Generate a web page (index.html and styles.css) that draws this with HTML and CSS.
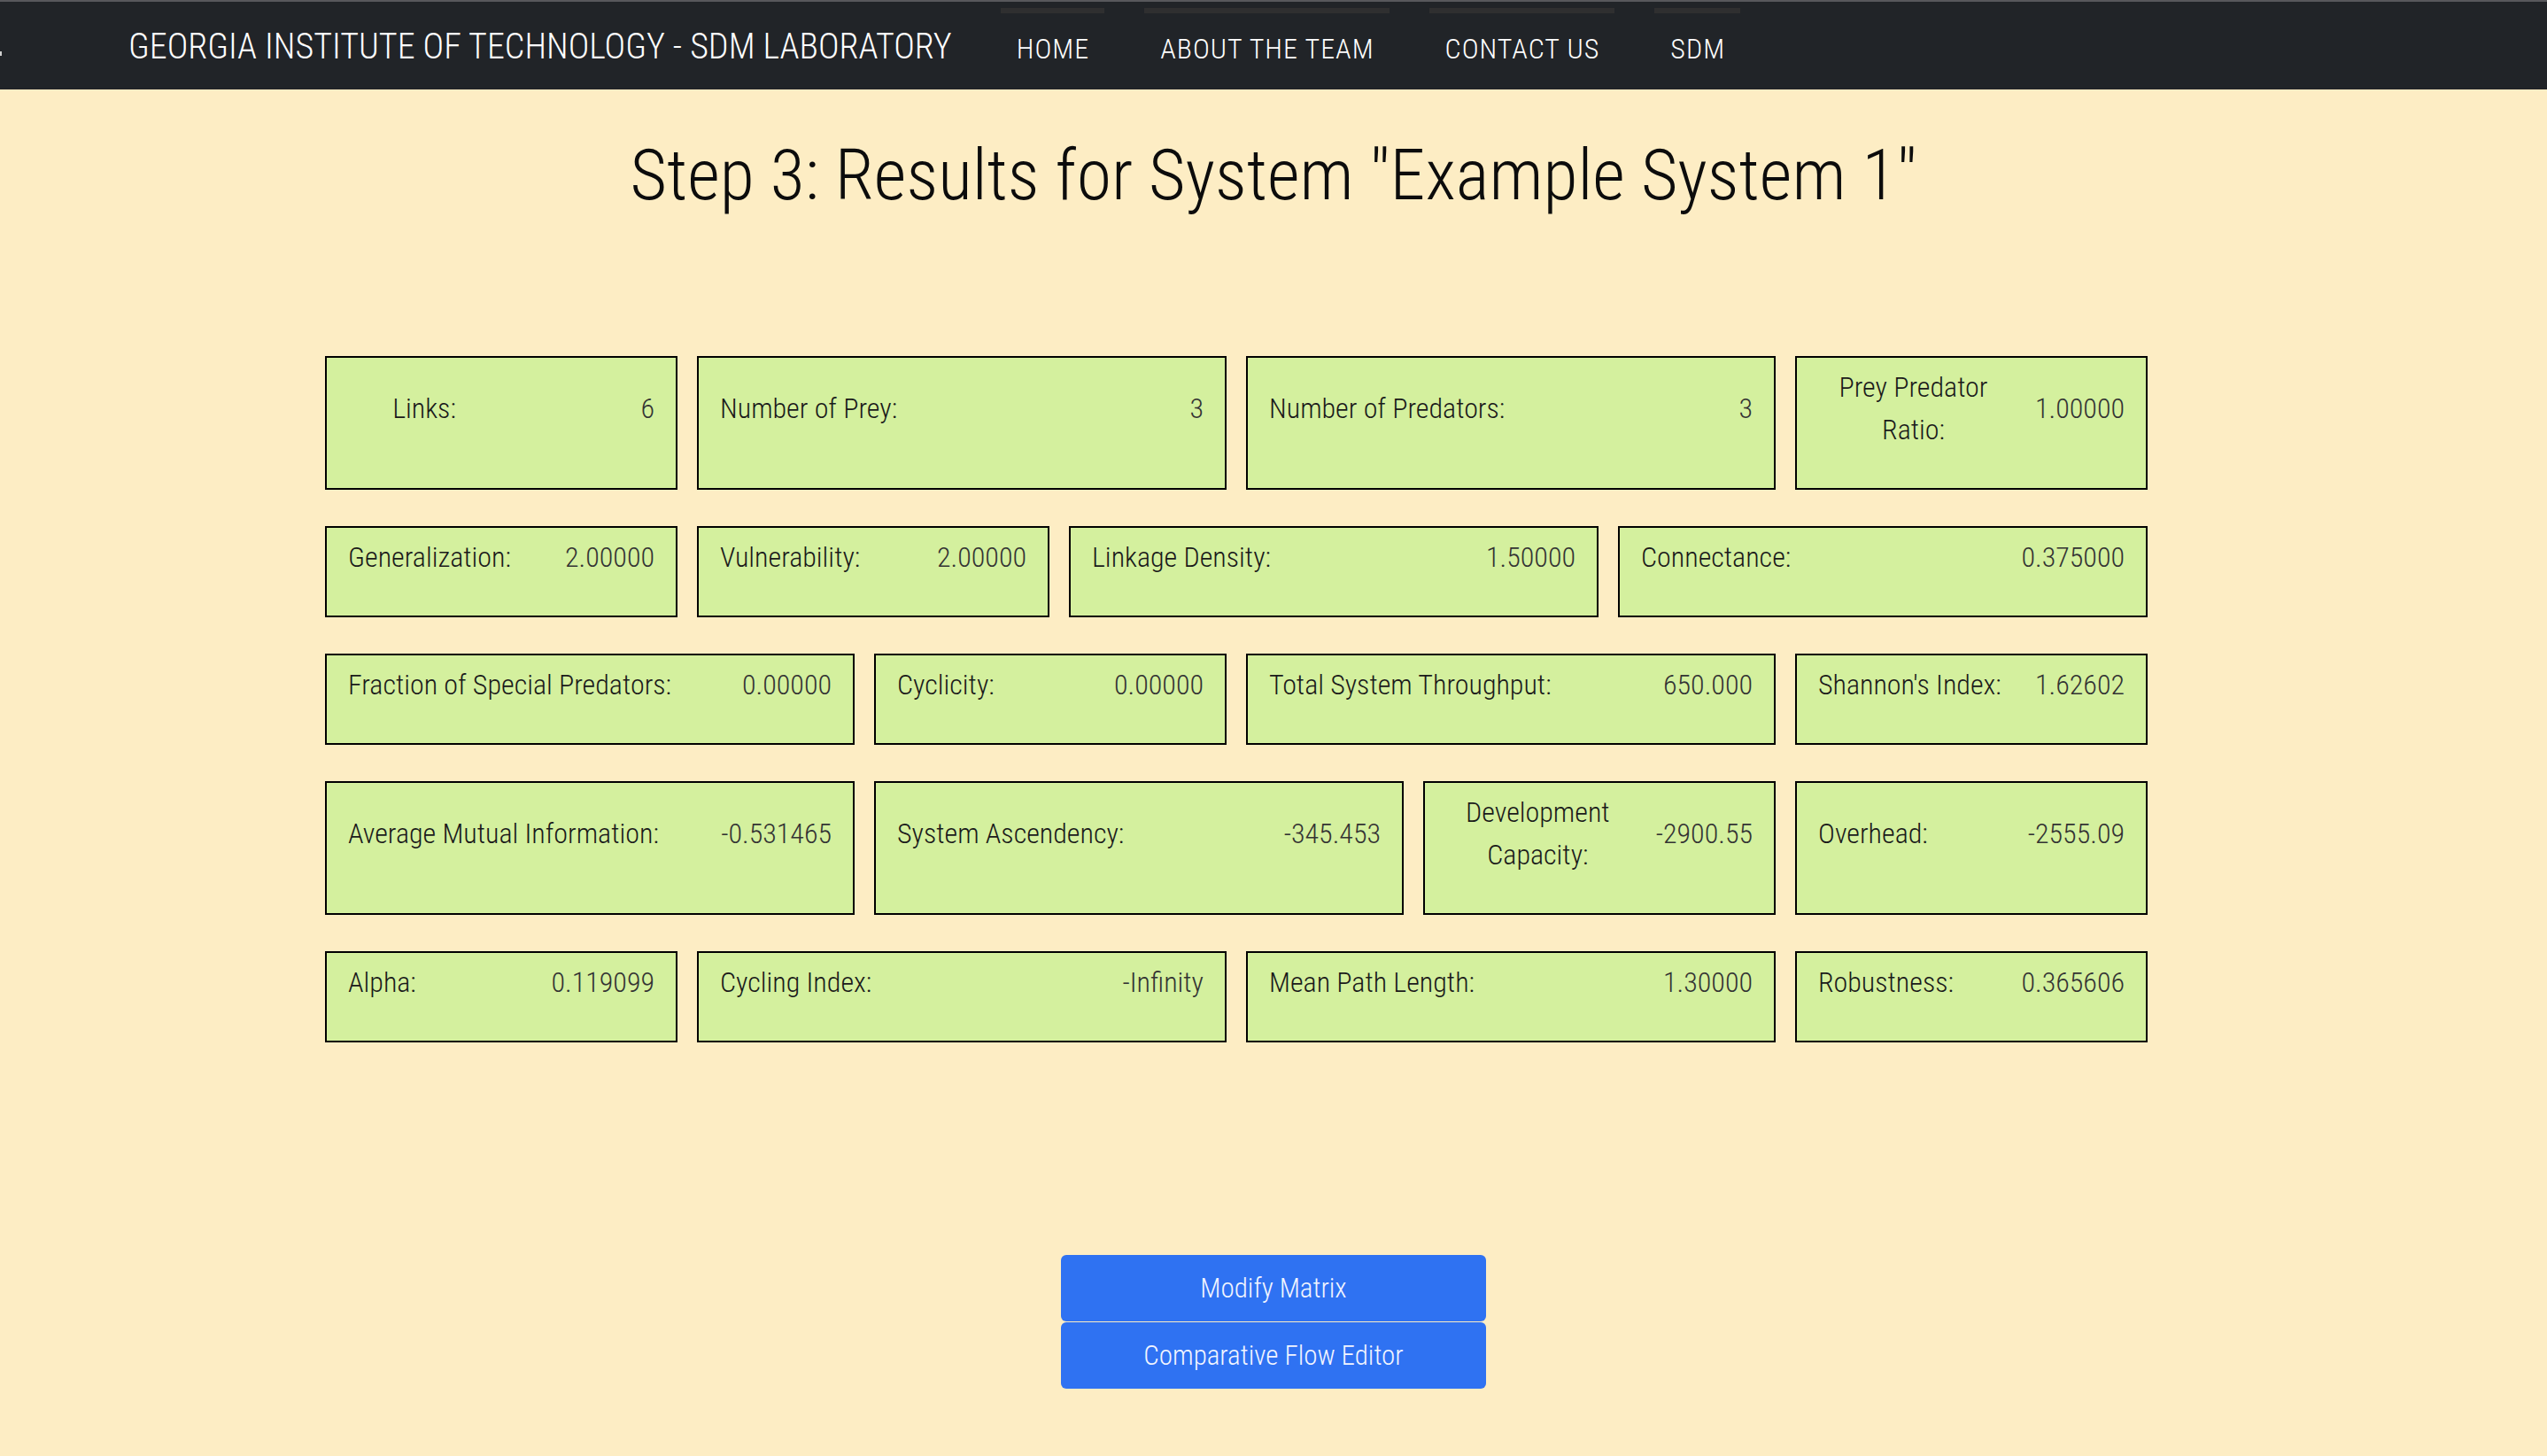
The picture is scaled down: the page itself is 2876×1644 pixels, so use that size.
FILE: index.html
```html
<!DOCTYPE html>
<html lang="en">
<head>
<meta charset="utf-8">
<title>Step 3: Results</title>
<link rel="stylesheet" href="styles.css">
</head>
<body>
<header class="navbar">
  <span class="edge-mark"></span>
  <a class="brand" href="#">GEORGIA INSTITUTE OF TECHNOLOGY - SDM LABORATORY</a>
  <nav class="nav">
    <a class="nav-link" href="#">HOME</a>
    <a class="nav-link" href="#">ABOUT THE TEAM</a>
    <a class="nav-link" href="#">CONTACT US</a>
    <a class="nav-link" href="#">SDM</a>
  </nav>
</header>

<main class="page">
  <h1 class="title">Step 3: Results for System "Example System 1"</h1>

  <section class="results">
    <div class="row">
      <div class="card c2"><div class="label wide">Links:</div><div class="value">6</div></div>
      <div class="card c3"><div class="label">Number of Prey:</div><div class="value">3</div></div>
      <div class="card c3"><div class="label">Number of Predators:</div><div class="value">3</div></div>
      <div class="card c2"><div class="label">Prey Predator Ratio:</div><div class="value">1.00000</div></div>
    </div>
    <div class="row">
      <div class="card c2"><div class="label">Generalization:</div><div class="value">2.00000</div></div>
      <div class="card c2"><div class="label">Vulnerability:</div><div class="value">2.00000</div></div>
      <div class="card c3"><div class="label">Linkage Density:</div><div class="value">1.50000</div></div>
      <div class="card c3"><div class="label">Connectance:</div><div class="value">0.375000</div></div>
    </div>
    <div class="row">
      <div class="card c3"><div class="label">Fraction of Special Predators:</div><div class="value">0.00000</div></div>
      <div class="card c2"><div class="label">Cyclicity:</div><div class="value">0.00000</div></div>
      <div class="card c3"><div class="label">Total System Throughput:</div><div class="value">650.000</div></div>
      <div class="card c2"><div class="label">Shannon's Index:</div><div class="value">1.62602</div></div>
    </div>
    <div class="row">
      <div class="card c3"><div class="label">Average Mutual Information:</div><div class="value">-0.531465</div></div>
      <div class="card c3"><div class="label">System Ascendency:</div><div class="value">-345.453</div></div>
      <div class="card c2"><div class="label">Development Capacity:</div><div class="value">-2900.55</div></div>
      <div class="card c2"><div class="label">Overhead:</div><div class="value">-2555.09</div></div>
    </div>
    <div class="row">
      <div class="card c2"><div class="label">Alpha:</div><div class="value">0.119099</div></div>
      <div class="card c3"><div class="label">Cycling Index:</div><div class="value">-Infinity</div></div>
      <div class="card c3"><div class="label">Mean Path Length:</div><div class="value">1.30000</div></div>
      <div class="card c2"><div class="label">Robustness:</div><div class="value">0.365606</div></div>
    </div>
  </section>

  <div class="actions">
    <button class="btn" type="button">Modify Matrix</button>
    <button class="btn" type="button">Comparative Flow Editor</button>
  </div>
</main>
</body>
</html>
```

FILE: styles.css
```css
html, body {
  margin: 0;
  padding: 0;
}
body {
  background: #fdedc4;
  font-family: "Roboto Condensed", Roboto, "Liberation Sans", sans-serif;
  font-stretch: condensed;
  color: #2b2b2b;
  min-height: 1644px;
}

/* navbar */
.navbar {
  height: 99px;
  background: #212428;
  border-top: 2px solid #58585c;
  display: flex;
  align-items: center;
  position: relative;
}
.edge-mark {
  position: absolute;
  left: 0;
  top: 56px;
  width: 2px;
  height: 5px;
  background: #cfcfcf;
}
.brand {
  margin-left: 145px;
  color: #ffffff;
  text-decoration: none;
  font-size: 40px;
  font-weight: 300;
  line-height: 1;
  white-space: nowrap;
  margin-top: 2px;
}
.nav {
  display: flex;
  align-self: stretch;
  margin-left: 55px;
  gap: 45px;
}
.nav-link {
  color: #ffffff;
  text-decoration: none;
  font-size: 32px;
  font-weight: 300;
  letter-spacing: 1px;
  padding: 0 17px 0 18px;
  border-top: 6px solid #2f2f30;
  margin-top: 7px;
  display: flex;
  align-items: center;
  padding-bottom: 6px;
}

/* title */
.page {
  display: flex;
  flex-direction: column;
  align-items: center;
}
.title {
  margin: 49px 0 0;
  font-size: 80px;
  line-height: 97px;
  font-weight: 300;
  color: #0c0c0c;
  text-align: center;
}

/* results grid */
.results {
  width: 2142px;
  margin-top: 155px;
  display: flex;
  flex-direction: column;
  gap: 41px;
}
.row {
  display: flex;
  gap: 22px;
  align-items: stretch;
}
.card {
  box-sizing: border-box;
  background: #d4f09e;
  border: 2px solid #000;
  padding: 9px 24px 42px 24px;
  display: flex;
  align-items: flex-start;
  font-size: 32px;
  line-height: 48px;
}
.card > .label,
.card > .value {
  align-self: center;
}
.c2 { width: 398px; }
.c3 { width: 598px; }
.label {
  flex: 0 1 auto;
  text-align: center;
  font-weight: 360;
  color: #1a1a1a;
}
.label.wide { min-width: 172px; }
.value {
  flex: 0 0 auto;
  margin-left: auto;
  padding-left: 30px;
  font-weight: 300;
  color: #333;
  white-space: nowrap;
}

/* buttons */
.actions {
  margin-top: 240px;
  width: 480px;
  display: flex;
  flex-direction: column;
  gap: 1px;
}
.btn {
  height: 75px;
  border: none;
  border-radius: 6px;
  background: #2f72f2;
  color: #f2f5ff;
  font-family: inherit;
  font-stretch: condensed;
  font-size: 31px;
  font-weight: 300;
  cursor: pointer;
}
```
